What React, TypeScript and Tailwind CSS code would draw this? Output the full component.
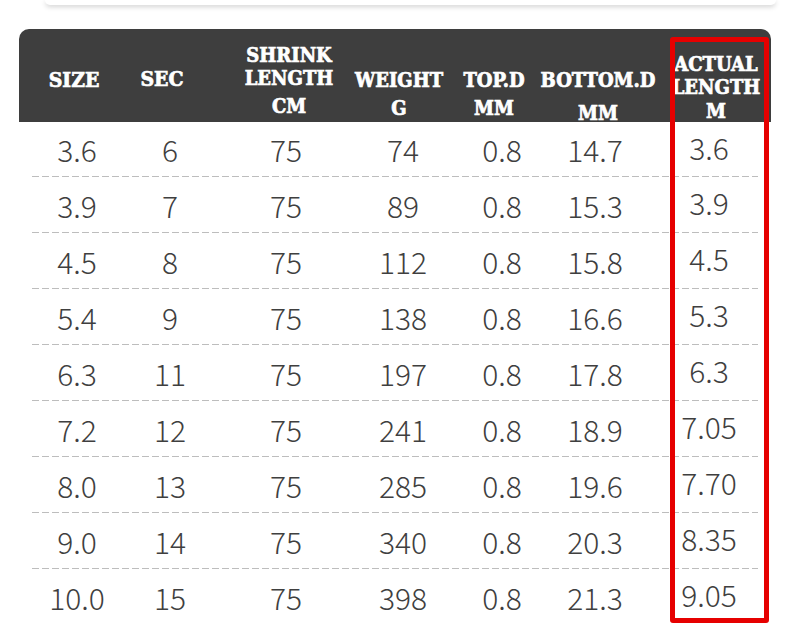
import React from "react";

const rows: string[][] = [
  ["3.6", "6", "75", "74", "0.8", "14.7", "3.6"],
  ["3.9", "7", "75", "89", "0.8", "15.3", "3.9"],
  ["4.5", "8", "75", "112", "0.8", "15.8", "4.5"],
  ["5.4", "9", "75", "138", "0.8", "16.6", "5.3"],
  ["6.3", "11", "75", "197", "0.8", "17.8", "6.3"],
  ["7.2", "12", "75", "241", "0.8", "18.9", "7.05"],
  ["8.0", "13", "75", "285", "0.8", "19.6", "7.70"],
  ["9.0", "14", "75", "340", "0.8", "20.3", "8.35"],
  ["10.0", "15", "75", "398", "0.8", "21.3", "9.05"],
];

const headFont = { fontFamily: '"DejaVu Serif Condensed", "DejaVu Serif", serif' };
const bodyFont = { fontFamily: '"Noto Sans CJK SC", "Noto Sans", sans-serif' };

function HLine({ children, className = "" }: { children: React.ReactNode; className?: string }) {
  return (
    <div
      className={
        "leading-none whitespace-nowrap font-bold text-[20px] text-white [-webkit-text-stroke:0.7px_#ffffff] " +
        className
      }
    >
      {children}
    </div>
  );
}

export default function App() {
  return (
    <div className="w-[790px] h-[643px] bg-white relative overflow-hidden">
      {/* top card edge */}
      <div className="ml-[45px] mr-[14px] h-[5px] bg-white rounded-b-[6px] shadow-[0_2px_5px_rgba(0,0,0,0.18)]" />

      <div className="ml-[19px] w-[752px] mt-[24px] relative">
        {/* header */}
        <div
          className="h-[93px] bg-[#3e3e3e] rounded-t-[10px] grid grid-cols-[116px_70px_162px_72px_126px_60px_146px]"
          style={headFont}
        >
          <div className="flex flex-col items-center pr-[6px] pt-[40px]">
            <HLine className="text-[21px]">SIZE</HLine>
          </div>
          <div className="flex flex-col items-center pr-[16px] pt-[39px]">
            <HLine className="text-[21px]">SEC</HLine>
          </div>
          <div className="flex flex-col items-center pl-[6px] pt-[16px]">
            <HLine>SHRINK</HLine>
            <HLine className="mt-[3px]">LENGTH</HLine>
            <HLine className="mt-[8px]">CM</HLine>
          </div>
          <div className="flex flex-col items-center pr-[8px] pt-[41px]">
            <HLine>WEIGHT</HLine>
            <HLine className="mt-[8px]">G</HLine>
          </div>
          <div className="flex flex-col items-center pr-[16px] pt-[41px]">
            <HLine>TOP.D</HLine>
            <HLine className="mt-[8px]">MM</HLine>
          </div>
          <div className="flex flex-col items-center pl-[6px] pt-[41px]">
            <HLine>BOTTOM.D</HLine>
            <HLine className="mt-[13px]">MM</HLine>
          </div>
          <div className="flex flex-col items-center pl-[36px] pt-[25px]">
            <HLine>ACTUAL</HLine>
            <HLine className="mt-[3px]">LENGTH</HLine>
            <HLine className="mt-[4px]">M</HLine>
          </div>
        </div>

        {/* body */}
        <div style={bodyFont} className="text-[#3f3f3f]">
          {rows.map((r, i) => (
            <div key={i}>
              <div
                className={
                  "grid grid-cols-[116px_70px_162px_72px_126px_60px_146px] items-center " +
                  (i === 0 ? "h-[54px]" : "h-[55px]")
                }
              >
                {r.map((v, j) => (
                  <div
                    key={j}
                    className={
                      "flex justify-center whitespace-nowrap text-[30px] leading-none font-light " +
                      (j === 6 ? "pl-[22px] -mt-[5px]" : "")
                    }
                  >
                    {v}
                  </div>
                ))}
              </div>
              {i < rows.length - 1 && (
                <div className="ml-[13px] w-[726px] h-px bg-[repeating-linear-gradient(to_right,#bdbdbd_0px,#bdbdbd_7px,transparent_7px,transparent_10px)]" />
              )}
            </div>
          ))}
        </div>

        {/* red highlight box */}
        <div className="absolute left-[651px] top-[8px] w-[99px] h-[586px] border-[5px] border-[#e60000] rounded-[3px]" />
      </div>
    </div>
  );
}
